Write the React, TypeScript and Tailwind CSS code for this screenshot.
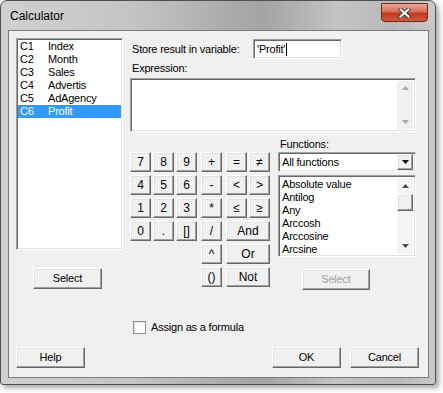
import React from 'react';

const raised =
  'bg-[#f0f0f0] border border-t-white border-l-white border-r-[#696969] border-b-[#696969] shadow-[inset_-1px_-1px_0_#a0a0a0,inset_1px_1px_0_#e3e3e3]';
const sunken =
  'bg-white border border-t-[#a0a0a0] border-l-[#a0a0a0] border-r-white border-b-white shadow-[inset_1px_1px_0_#696969,inset_-1px_-1px_0_#e3e3e3]';

function Btn({
  children,
  className = '',
  disabled = false,
}: {
  children: React.ReactNode;
  className?: string;
  disabled?: boolean;
}) {
  return (
    <div
      className={`${raised} flex items-center justify-center leading-none ${
        disabled ? 'text-[#a0a0a0]' : 'text-black'
      } ${className}`}
    >
      {children}
    </div>
  );
}

function Arrow({ up, color = '#4d4d4d' }: { up?: boolean; color?: string }) {
  return (
    <svg width="7" height="4" viewBox="0 0 7 4">
      {up ? <polygon points="0,4 7,4 3.5,0" fill={color} /> : <polygon points="0,0 7,0 3.5,4" fill={color} />}
    </svg>
  );
}

const columns = [
  ['C1', 'Index'],
  ['C2', 'Month'],
  ['C3', 'Sales'],
  ['C4', 'Advertis'],
  ['C5', 'AdAgency'],
  ['C6', 'Profit'],
];

const functions = ['Absolute value', 'Antilog', 'Any', 'Arccosh', 'Arccosine', 'Arcsine'];

export default function App() {
  return (
    <div className="w-[443px] h-[393px] bg-white font-['Liberation_Sans',Arial,sans-serif] text-[11px] tracking-[-0.2px] text-black">
      <div className="w-[436px] h-[385px] rounded-t-[7px] rounded-b-[3px] border border-[#4f4f4f] bg-[linear-gradient(90deg,#d0d0d0_0%,#c4c4c4_30%,#a3a3a3_60%,#c4c4c4_78%,#b8b8b8_90%,#c9c9c9_100%)] shadow-[3px_3px_5px_rgba(0,0,0,0.35)] overflow-hidden">
        {/* title bar */}
        <div className="h-[29px] flex justify-between">
          <div className="pl-[9px] pt-[8px] text-[12px] leading-[15px] tracking-normal text-black">Calculator</div>
          <div className="mr-[7px] mt-[2px] w-[47px] h-[19px] rounded-b-[4px] border border-[#6b2a1f] bg-[linear-gradient(180deg,#e8a897_0%,#d66f57_45%,#c2391f_55%,#cf5a3d_100%)] flex items-center justify-center">
            <svg width="13" height="10" viewBox="0 0 13 10">
              <path d="M2.5 1.5 L10.5 8.5 M10.5 1.5 L2.5 8.5" stroke="#3b3b3b" strokeWidth="3.8" strokeLinecap="square" />
              <path d="M2.5 1.5 L10.5 8.5 M10.5 1.5 L2.5 8.5" stroke="#ffffff" strokeWidth="2" strokeLinecap="square" />
            </svg>
          </div>
        </div>

        {/* client area */}
        <div className="ml-[7px] w-[421px] h-[348px] border border-[#7b7b7b] bg-[#f0f0f0]">
          <div className="flex pl-[7px] pt-[7px]">
            {/* left column */}
            <div className="w-[107px]">
              <div className={`${sunken} h-[212px] pt-[1px] px-[1px]`}>
                {columns.map(([c, n], i) => (
                  <div
                    key={c}
                    className={`flex h-[13px] leading-[13px] pl-[2px] ${i === 5 ? 'bg-[#3399ff] text-white' : ''}`}
                  >
                    <span className="w-[28px]">{c}</span>
                    <span>{n}</span>
                  </div>
                ))}
              </div>
              <Btn className="mt-[18px] ml-[17px] w-[69px] h-[21px]">Select</Btn>
            </div>

            {/* right column */}
            <div className="ml-[7px] w-[286px]">
              <div className="flex items-center mt-[1px] h-[20px]">
                <div className="w-[123px] pl-[2px]">Store result in variable:</div>
                <div className={`${sunken} w-[89px] h-[20px] flex items-center pl-[3px]`}>
                  <span>'Profit'</span>
                  <span className="ml-[1px] w-[1px] h-[13px] bg-black" />
                </div>
              </div>
              <div className="mt-[3px] h-[13px] leading-[13px] pl-[2px]">Expression:</div>
              <div className={`${sunken} mt-[3px] h-[54px] flex justify-end p-[2px]`}>
                <div className="w-[16px] h-full bg-[#f0f0f0] flex flex-col items-center justify-between py-[5px]">
                  <Arrow up color="#a8a8a8" />
                  <Arrow color="#a8a8a8" />
                </div>
              </div>

              <div className="flex">
                {/* keypad */}
                <div className="flex pt-[20px]">
                  <div className="grid grid-cols-[21px_21px_21px] auto-rows-[20px] gap-x-[2px] gap-y-[3px]">
                    {['7', '8', '9', '4', '5', '6', '1', '2', '3', '0', '.', '[]'].map((k) => (
                      <Btn key={k} className="text-[12px] tracking-normal">
                        {k}
                      </Btn>
                    ))}
                  </div>
                  <div className="ml-[4px] grid grid-cols-[21px] auto-rows-[20px] gap-y-[3px]">
                    {['+', '-', '*', '/', '^', '()'].map((k) => (
                      <Btn key={k} className="text-[12px] tracking-normal">
                        {k}
                      </Btn>
                    ))}
                  </div>
                  <div className="ml-[4px] grid grid-cols-[21px_21px] auto-rows-[20px] gap-x-[2px] gap-y-[3px]">
                    {['=', '≠', '<', '>', '≤', '≥'].map((k) => (
                      <Btn key={k} className="text-[12px] tracking-normal">
                        {k}
                      </Btn>
                    ))}
                    <Btn className="col-span-2 text-[12px] tracking-normal">And</Btn>
                    <Btn className="col-span-2 text-[12px] tracking-normal">Or</Btn>
                    <Btn className="col-span-2 text-[12px] tracking-normal">Not</Btn>
                  </div>
                </div>

                {/* functions */}
                <div className="ml-[8px] w-[138px] pt-[6px]">
                  <div className="h-[14px] leading-[13px] pl-[2px]">Functions:</div>
                  <div className={`${sunken} h-[20px] flex items-center p-[2px]`}>
                    <div className="flex-1 pl-[1px]">All functions</div>
                    <div className={`${raised} w-[16px] h-[16px] flex items-center justify-center`}>
                      <Arrow color="#000" />
                    </div>
                  </div>
                  <div className={`${sunken} mt-[3px] h-[82px] flex p-[2px]`}>
                    <div className="flex-1 pl-[1px]">
                      {functions.map((f) => (
                        <div key={f} className="h-[13px] leading-[13px]">
                          {f}
                        </div>
                      ))}
                    </div>
                    <div className="w-[16px] h-full bg-[#f4f4f4] flex flex-col items-center">
                      <div className="h-[16px] flex items-center">
                        <Arrow up />
                      </div>
                      <div className={`${raised} w-[16px] h-[17px]`} />
                      <div className="flex-1" />
                      <div className="h-[16px] flex items-center">
                        <Arrow />
                      </div>
                    </div>
                  </div>
                  <Btn disabled className="mt-[12px] ml-[24px] w-[68px] h-[21px]">
                    Select
                  </Btn>
                </div>
              </div>
            </div>
          </div>

          {/* checkbox */}
          <div className="flex items-center pl-[124px] mt-[31px] h-[13px]">
            <div className="w-[13px] h-[13px] bg-white border border-[#8e8f8f] shadow-[inset_1px_1px_0_#e0e0e0]" />
            <span className="ml-[5px]">Assign as a formula</span>
          </div>

          {/* bottom buttons */}
          <div className="flex pl-[7px] pr-[9px] mt-[13px]">
            <Btn className="w-[69px] h-[21px]">Help</Btn>
            <Btn className="ml-auto w-[69px] h-[21px]">OK</Btn>
            <Btn className="ml-[9px] w-[69px] h-[21px]">Cancel</Btn>
          </div>
        </div>
      </div>
    </div>
  );
}
